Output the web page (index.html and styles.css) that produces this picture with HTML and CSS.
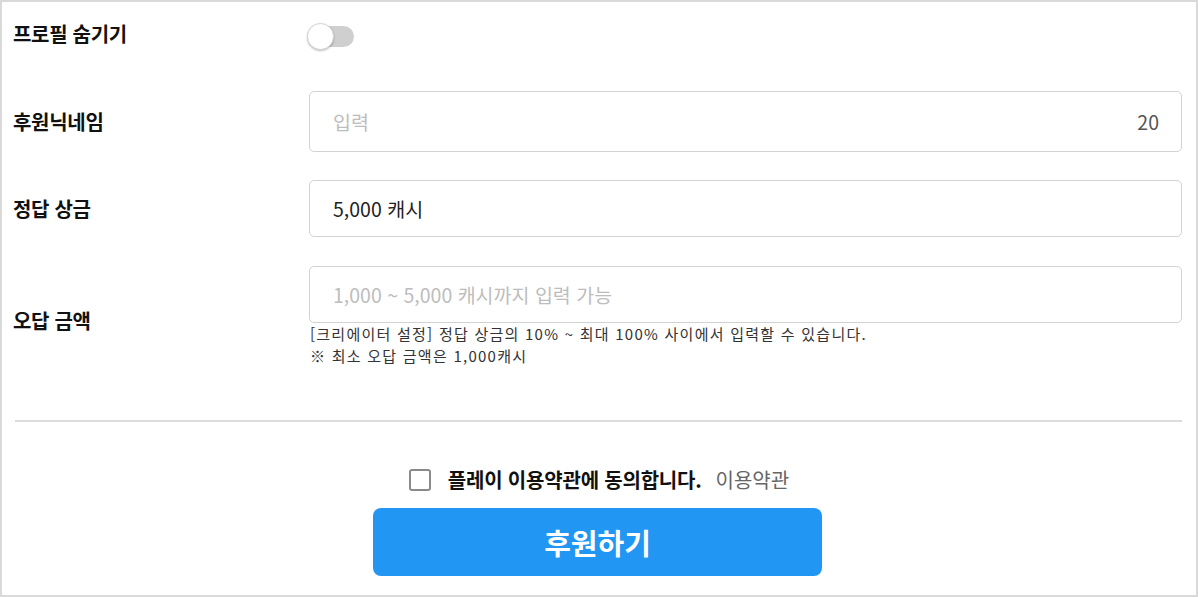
FILE: index.html
```html
<!DOCTYPE html>
<html lang="ko">
<head>
<meta charset="utf-8">
<link rel="stylesheet" href="styles.css">
</head>
<body>
<div class="frame">
  <div class="row row-toggle">
    <div class="label">프로필 숨기기</div>
    <div class="field"><span class="toggle"><span class="knob"></span></span></div>
  </div>
  <div class="row row-nick">
    <div class="label">후원닉네임</div>
    <div class="field">
      <div class="input tall"><span class="ph">입력</span><span class="count">20</span></div>
    </div>
  </div>
  <div class="row row-prize">
    <div class="label">정답 상금</div>
    <div class="field">
      <div class="input"><span class="val">5,000 캐시</span></div>
    </div>
  </div>
  <div class="row row-wrong">
    <div class="label">오답 금액</div>
    <div class="field">
      <div class="input"><span class="ph">1,000 ~ 5,000 캐시까지 입력 가능</span></div>
      <div class="help">
        <div class="help-line">[크리에이터 설정] 정답 상금의 10% ~ 최대 100% 사이에서 입력할 수 있습니다.</div>
        <div class="help-line">※ 최소 오답 금액은 1,000캐시</div>
      </div>
    </div>
  </div>
  <hr class="divider">
  <div class="agree">
    <span class="checkbox"></span>
    <span class="agree-text">플레이 이용약관에 동의합니다.</span>
    <span class="terms">이용약관</span>
  </div>
  <div class="actions">
    <button class="submit">후원하기</button>
  </div>
</div>
</body>
</html>
```

FILE: styles.css
```css
html, body {
  margin: 0;
  padding: 0;
  background: #fff;
}
body {
  font-family: "Noto Sans CJK KR", "Noto Sans", sans-serif;
  color: #111;
}
.frame {
  width: 1198px;
  height: 597px;
  box-sizing: border-box;
  border: 2px solid #d9d9d9;
  padding: 10px 14px 0 11px;
}
.row {
  display: grid;
  grid-template-columns: 296px 1fr;
  align-items: center;
}
.label {
  font-size: 20px;
  line-height: 24px;
  font-weight: 700;
  color: #111;
  letter-spacing: -0.3px;
}
.row-toggle { height: 48px; }
.row-toggle .label { padding-bottom: 4px; }
.row-nick { margin-top: 31px; }
.row-prize { margin-top: 28px; }
.row-wrong { margin-top: 29px; }
.row-wrong .label { padding-top: 8px; }

.toggle {
  position: relative;
  display: block;
  width: 39px;
  height: 21px;
  margin-left: 6px;
  background: #cfcfcf;
  border-radius: 11px;
}
.knob {
  position: absolute;
  left: -8px;
  top: -3px;
  width: 27px;
  height: 27px;
  box-sizing: border-box;
  border-radius: 50%;
  background: #fff;
  border: 1px solid #d4d4d4;
  box-shadow: 0 1px 2px rgba(0,0,0,0.25);
}

.input {
  height: 57px;
  box-sizing: border-box;
  border: 1px solid #d2d2d2;
  border-radius: 5px;
  display: flex;
  align-items: center;
  justify-content: space-between;
  padding: 0 22px 0 23px;
  font-size: 19.5px;
}
.input.tall { height: 61px; }
.ph { color: #bdbdbd; }
.val { color: #222; }
.count { color: #555; }
.help {
  margin: 0 0 0 1px;
  font-size: 15px;
  color: #333;
  letter-spacing: 1.25px;
}
.help-line {
  height: 22px;
  line-height: 22px;
}
.divider {
  margin: 53px 0 0 2px;
  border: 0;
  height: 2px;
  background: #dcdcdc;
}
.agree {
  display: flex;
  align-items: center;
  justify-content: center;
  margin-top: 46px;
  height: 24px;
  font-size: 20px;
  line-height: 24px;
  padding-left: 3px;
}
.checkbox {
  width: 22px;
  height: 22px;
  box-sizing: border-box;
  border: 2px solid #8a8a8a;
  border-radius: 3px;
  margin-right: 17px;
}
.agree-text {
  font-weight: 700;
  color: #111;
  letter-spacing: -0.2px;
}
.terms {
  margin-left: 14px;
  color: #666;
}
.actions {
  display: flex;
  justify-content: center;
  margin-top: 16px;
}
.submit {
  width: 449px;
  height: 68px;
  border: 0;
  border-radius: 8px;
  background: #2196f3;
  color: #fff;
  font-family: "Noto Sans CJK KR", "Noto Sans", sans-serif;
  font-size: 29px;
  font-weight: 700;
}
```
